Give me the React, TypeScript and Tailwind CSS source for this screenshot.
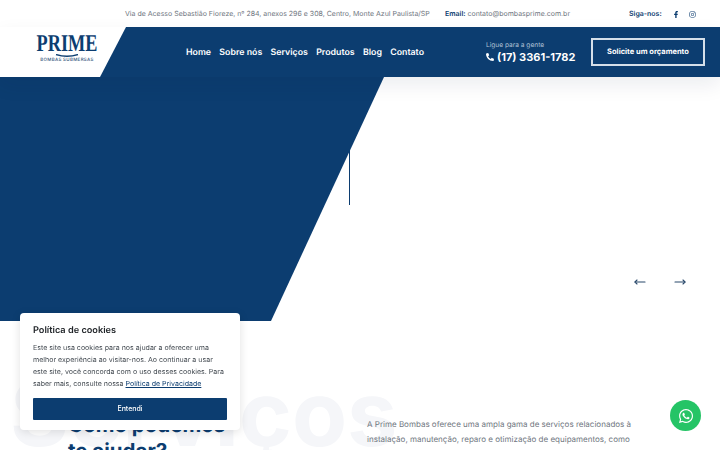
import { useState } from 'react';
import { MoveLeft, MoveRight } from 'lucide-react';
import { FaFacebookF, FaInstagram, FaWhatsapp, FaPhoneAlt } from 'react-icons/fa';

const links = ['Home', 'Sobre nós', 'Serviços', 'Produtos', 'Blog', 'Contato'];

function Logo() {
    return (
        <div className="-mt-[6px] flex flex-col items-center text-[#0c3d70]">
            <span className="font-['Liberation_Serif',serif] text-[24px] leading-[19px] font-bold scale-x-[0.76]">PRIME</span>
            <svg width="24" height="3" viewBox="0 0 24 3">
                <path d="M1 0.5 Q12 4 23 0.5" stroke="#0c3d70" strokeWidth="1.4" fill="none" />
            </svg>
            <span className="mt-[1px] text-[4.5px] leading-[6px] tracking-[0.3px] whitespace-nowrap text-[#34557c] font-medium">BOMBAS SUBMERSAS</span>
        </div>
    );
}

function TopBar() {
    return (
        <div className="h-[27px] bg-white flex items-center text-[7px] whitespace-nowrap text-[#6f7680] pl-[125px] pt-[1px]">
            <span className="w-[320px]">Via de Acesso Sebastião Fioreze, nº 284, anexos 296 e 308, Centro, Monte Azul Paulista/SP</span>
            <span className="w-[184px]">
                <b className="font-semibold text-[#0c3d70]">Email:</b> contato@bombasprime.com.br
            </span>
            <span className="font-semibold text-[#0c3d70]">Siga-nos:</span>
            <FaFacebookF className="ml-[11px] w-[6px] h-[7px] text-[#0c3d70]" />
            <FaInstagram className="ml-[10px] w-[7px] h-[7px] text-[#0c3d70]" />
        </div>
    );
}

function Nav() {
    return (
        <div className="relative z-10 h-[50px] bg-[#0c3d70] flex items-center whitespace-nowrap shadow-[0_8px_20px_rgba(12,30,70,0.08)]">
            <div className="w-[126px] h-full bg-white [clip-path:polygon(0_0,100%_0,100px_100%,0_100%)] pl-[37px] flex items-center">
                <div className="w-[60px] flex justify-center">
                    <Logo />
                </div>
            </div>
            <nav className="ml-[60px] w-[238px] pt-[2px] flex justify-between text-[8.8px] font-semibold text-white">
                {links.map((l) => (
                    <a key={l}>{l}</a>
                ))}
            </nav>
            <div className="ml-[62px] w-[90px] flex flex-col text-white">
                <span className="text-[6.6px] leading-[10px] text-[#b0c2d6]">Ligue para a gente</span>
                <span className="flex items-center gap-[3px] text-[11px] leading-[15px] font-bold">
                    <FaPhoneAlt className="w-[8px] h-[8px]" />
                    (17) 3361-1782
                </span>
            </div>
            <a className="ml-[15px] w-[114px] h-[28px] border-2 border-[#d5dfe9] flex items-center justify-center text-[7.5px] font-bold text-white">
                Solicite um orçamento
            </a>
        </div>
    );
}

function Hero() {
    return (
        <section className="relative h-[244px] bg-white">
            <div className="w-[384px] h-full bg-[#0c3d70] [clip-path:polygon(0_0,100%_0,271px_100%,0_100%)]" />
            <div className="absolute left-[349px] top-[73px] w-px h-[55px] bg-[#0c3d70]" />
            <div className="absolute left-[634px] top-[199px] flex gap-[28px] text-[#29486b]">
                <MoveLeft className="w-[12px] h-[12px]" strokeWidth={2.2} />
                <MoveRight className="w-[12px] h-[12px]" strokeWidth={2.2} />
            </div>
        </section>
    );
}

function Services() {
    return (
        <section className="relative h-[200px] bg-white">
            <span className="absolute left-[10px] top-[43px] text-[90px] leading-[100px] font-bold text-[#f5f6f9]">Serviços</span>
            <div className="relative pt-[91px] pl-[68px] pr-[86px] flex">
                <h2 className="w-[299px] shrink-0 text-[20.5px] leading-[26px] font-bold text-[#0c3d70]">
                    Como podemos
                    <br />
                    te ajudar?
                </h2>
                <p className="text-[8px] leading-[14.5px] text-[#6f7680] pt-[5px]">
                    A Prime Bombas oferece uma ampla gama de serviços relacionados à instalação, manutenção, reparo e otimização de equipamentos, como
                    motobombas, mangotes e acoplamentos de engate rápido.
                </p>
            </div>
        </section>
    );
}

function CookieBox() {
    const [open, setOpen] = useState(true);
    if (!open) return null;
    return (
        <div className="fixed left-[20px] top-[313px] z-20 w-[220px] h-[117px] bg-white rounded-[4px] shadow-[0_2px_10px_rgba(0,0,0,0.12)] px-[13px] pt-[11px]">
            <h3 className="text-[9.2px] leading-[13px] font-semibold text-[#212529]">Política de cookies</h3>
            <p className="mt-[5px] text-[7.05px] leading-[12px] text-[#444b52]">
                Este site usa cookies para nos ajudar a oferecer uma melhor experiência ao visitar-nos. Ao continuar a usar este site, você concorda com o uso desses cookies. Para saber mais, consulte nossa{' '}
                <a className="underline text-[#0c3d70]">Política de Privacidade</a>
            </p>
            <button onClick={() => setOpen(false)} className="mt-[8px] w-full h-[22px] bg-[#0c3d70] text-white text-[7px] font-medium rounded-[1px]">
                Entendi
            </button>
        </div>
    );
}

export default function App() {
    return (
        <div className="h-[450px] overflow-hidden bg-white font-['Inter',sans-serif] [text-rendering:geometricPrecision]">
            <TopBar />
            <Nav />
            <Hero />
            <Services />
            <CookieBox />
            <a className="fixed left-[670px] top-[400px] z-20 w-[31px] h-[31px] rounded-full bg-[#25c466] flex items-center justify-center text-white">
                <FaWhatsapp className="w-[16px] h-[16px]" />
            </a>
        </div>
    );
}
